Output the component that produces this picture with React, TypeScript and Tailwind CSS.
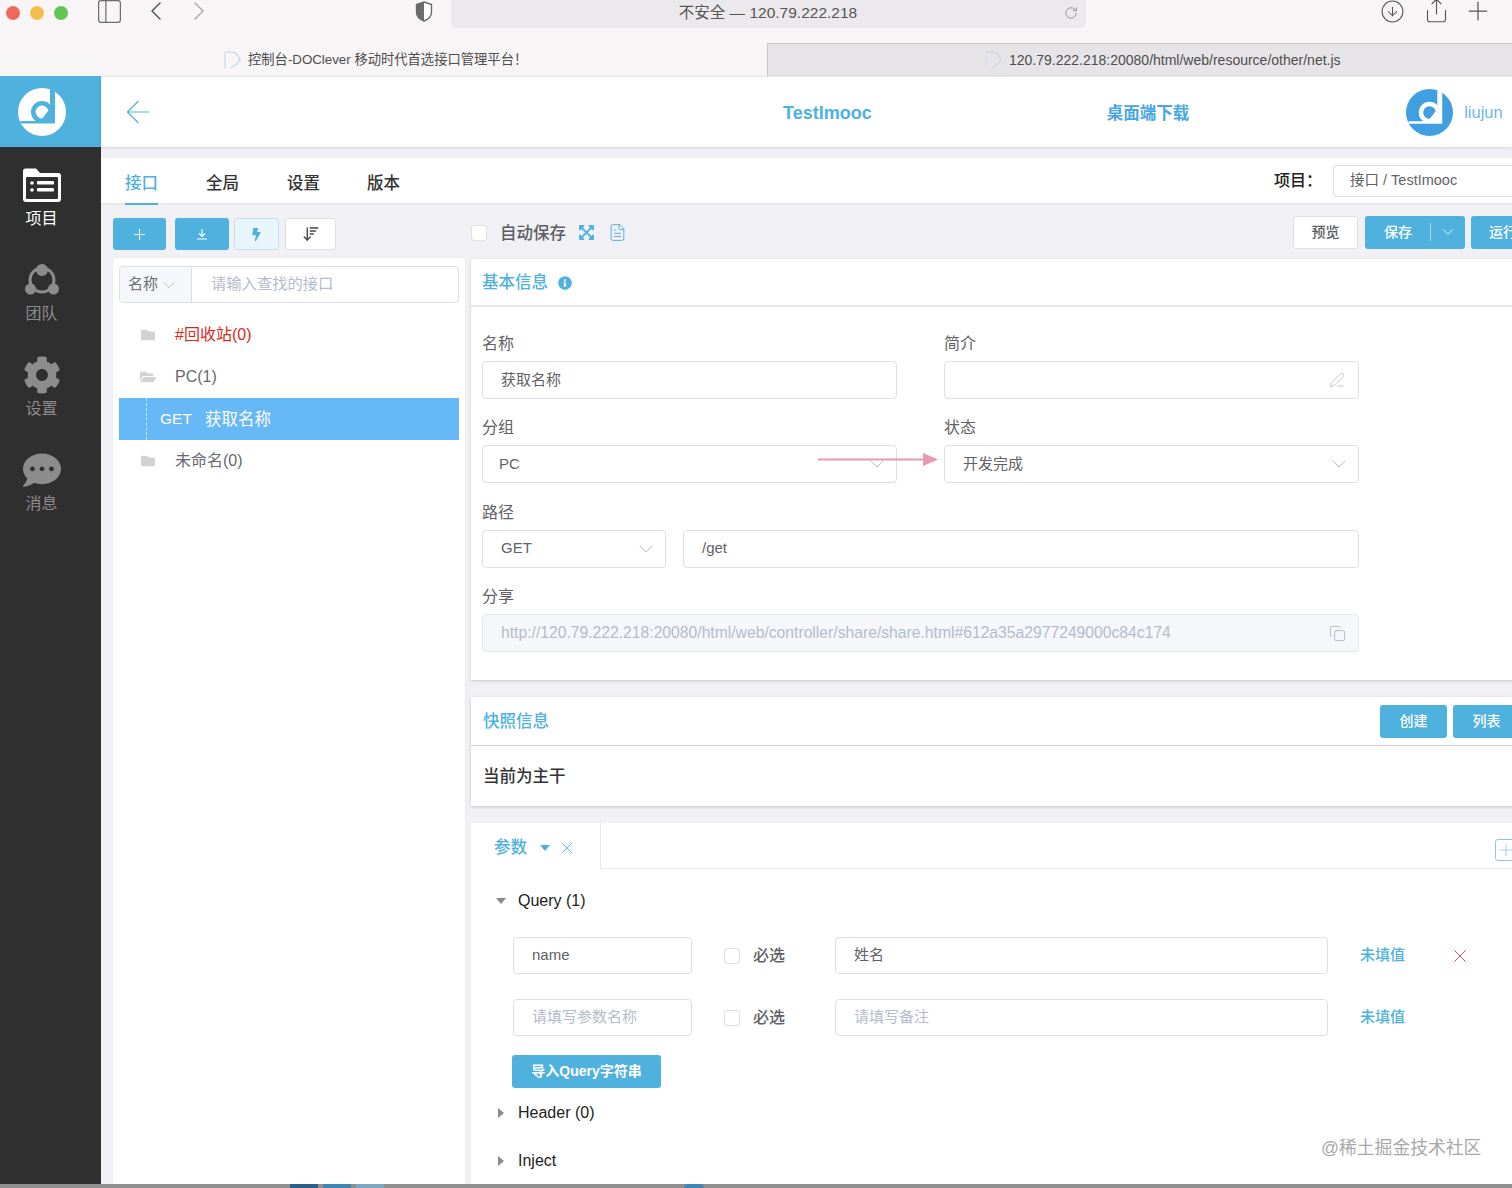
import React from "react";
import { ArrowLeft, ChevronDown, ChevronLeft, ChevronRight, CircleArrowDown, Copy, FileText, PanelLeft, Plus, RotateCw, Share, X, ArrowDownWideNarrow, PenLine } from "lucide-react";
import { FaBolt, FaCog, FaCommentDots, FaExpandArrowsAlt, FaFolder, FaFolderOpen, FaInfoCircle } from "react-icons/fa";

const font = "font-['Liberation_Sans','Noto_Sans_CJK_SC',sans-serif]";

function Logo({ size, fg, bg }: { size: number; fg: string; bg: string }) {
  return (
    <svg width={size} height={size} viewBox="0 0 48 48">
      <circle cx="24" cy="24" r="24" fill={fg} />
      <path d="M32 1.500H37V35.500H2.500V33H32Z" fill={bg} />
      <circle cx="24" cy="24" r="8.700" fill="none" stroke={bg} strokeWidth="4.600" />
      <path d="M30 23H33V34H24V31Z" fill={bg} />
    </svg>
  );
}

function Favicon() {
  return (
    <svg width="17" height="18" viewBox="0 0 17 18" fill="none">
      <path d="M1 1H7C12 1 15 5 16 9C14 12 11 15 7 17" stroke="#c4d4e4" strokeWidth="1.2" />
      <path d="M1 1V17" stroke="#d4e2f0" strokeWidth="1.6" />
    </svg>
  );
}

function NavItem({ icon, label, active }: { icon: React.ReactNode; label: string; active?: boolean }) {
  return (
    <div className={`h-[95px] pr-[18px] flex flex-col items-center ${active ? "text-white" : "text-[#8c8c8c]"}`}>
      <div className="h-[40px] mt-[18px] flex items-center justify-center">{icon}</div>
      <div className="text-[16px] leading-[24px] mt-[2px]">{label}</div>
    </div>
  );
}

function Field({ label, children }: { label: string; children: React.ReactNode }) {
  return (
    <div>
      <div className="pt-[1px] text-[16px] leading-[24px] text-[#5f6266]">{label}</div>
      <div className="mt-[5px]">{children}</div>
    </div>
  );
}

function Box({ children, className = "" }: { children?: React.ReactNode; className?: string }) {
  return (
    <div className={`h-[38px] rounded-[4px] border border-[#dcdfe6] bg-white flex items-center pl-[18px] pr-[12px] text-[15px] text-[#5f6266] ${className}`}>
      {children}
    </div>
  );
}

function Chev() {
  return <ChevronDown size={24} strokeWidth={0.8} className="ml-auto -mr-[5px] text-[#a8b0c0]" />;
}

function Check() {
  return <div className="w-[16px] h-[16px] rounded-[3px] border border-[#dcdfe6] bg-white shrink-0" />;
}

function TreeRow({ label, red, open }: { label: string; red?: boolean; open?: boolean }) {
  return (
    <div className="h-[42px] flex items-center pl-[21px]">
      {open ? <FaFolderOpen size={16} className="text-[#d2d2d2]" /> : <FaFolder size={14} className="text-[#d2d2d2] ml-[1px] mr-[1px]" />}
      <span className={`ml-[19px] text-[16px] ${red ? "text-[#e0281c]" : "text-[#666a70]"}`}>{label}</span>
    </div>
  );
}

function ParamRow({ name, note, placeholder, remove }: { name: string; note: string; placeholder?: boolean; remove?: boolean }) {
  const c = placeholder ? "text-[#b4bccc]" : "text-[#5f6266]";
  return (
    <div className="flex items-center ml-[42px] h-[37px]">
      <Box className={`w-[179px] !h-[37px] ${c}`}>{name}</Box>
      <div className="ml-[32px]"><Check /></div>
      <span className="ml-[13px] w-[32px] text-[16px] text-[#5f6266] font-medium whitespace-nowrap">必选</span>
      <Box className={`ml-[50px] w-[493px] !h-[37px] ${c}`}>{note}</Box>
      <span className="ml-[32px] w-[46px] text-[15px] font-medium text-[#4eb1de] whitespace-nowrap">未填值</span>
      {remove && <X size={22} strokeWidth={1} className="ml-[43px] text-[#e0443e]" />}
    </div>
  );
}

function Caret({ down, blue }: { down?: boolean; blue?: boolean }) {
  const color = blue ? "#4eb1de" : "#8a8a8a";
  return (
    <svg width="10" height="10" viewBox="0 0 10 10">
      {down ? <path d="M0 2H10L5 8Z" fill={color} /> : <path d="M2 0V10L8 5Z" fill={color} />}
    </svg>
  );
}

export default function App() {
  return (
    <div className={`relative w-[1512px] h-[1188px] overflow-hidden flex flex-col bg-[#f1f0f4] ${font}`}>
      {/* Browser chrome */}
      <div className="h-[76px] shrink-0 bg-[#f8f5f7] flex flex-col">
        <div className="h-[28px] flex items-start">
          <div className="flex items-center gap-[10px] pl-[6px] h-[25px]">
            <div className="w-[14px] h-[14px] rounded-full bg-[#ee6a5f]" />
            <div className="w-[14px] h-[14px] rounded-full bg-[#f5bd4f]" />
            <div className="w-[14px] h-[14px] rounded-full bg-[#61c454]" />
          </div>
          <PanelLeft size={29} strokeWidth={1} className="ml-[27px] -mt-[3px] shrink-0 text-[#6b6b6b]" />
          <ChevronLeft size={32} strokeWidth={1.1} className="ml-[16px] -mt-[5px] shrink-0 text-[#555]" />
          <ChevronRight size={32} strokeWidth={1.1} className="ml-[11px] -mt-[5px] shrink-0 text-[#aaa]" />
          <svg width="18" height="21" viewBox="0 0 18 21" className="ml-[200px] mt-[1px] shrink-0">
            <path d="M9 1L16.500 3.500V11C16.500 15.500 13 18.500 9 20C5 18.500 1.500 15.500 1.500 11V3.500Z" fill="#fff" stroke="#6b6b6b" strokeWidth="1.4" />
            <path d="M9 1L1.500 3.500V11C1.500 15.500 5 18.500 9 20Z" fill="#6b6b6b" />
          </svg>
          <div className="ml-[18px] w-[635px] h-[28px] shrink-0 bg-[#ebe9eb] rounded-b-[6px] flex items-center relative">
            <span className="w-full text-center text-[15.500px] text-[#555] pb-[2px] pr-[1px]">不安全 — 120.79.222.218</span>
            <RotateCw size={14} strokeWidth={1.2} className="absolute right-[8px] top-[6px] text-[#777]" />
          </div>
          <CircleArrowDown size={25} strokeWidth={1} className="ml-[294px] -mt-[1px] shrink-0 text-[#555]" />
          <Share size={27} strokeWidth={1} className="ml-[18px] -mt-[3px] shrink-0 text-[#555]" />
          <Plus size={30} strokeWidth={1} className="ml-[13px] -mt-[4px] shrink-0 text-[#555]" />
        </div>
        <div className="mt-[15px] h-[33px] flex text-[#4d4d4d]">
          <div className="w-[767px] flex items-center pl-[224px] text-[13.300px]">
            <Favicon />
            <span className="ml-[7px] whitespace-nowrap">控制台-DOClever 移动时代首选接口管理平台！</span>
          </div>
          <div className="flex-1 flex items-center pl-[217px] bg-[#e6e4e6] border-t border-l border-[#c8c6c8] text-[14px]">
            <Favicon />
            <span className="ml-[7px] whitespace-nowrap">120.79.222.218:20080/html/web/resource/other/net.js</span>
          </div>
        </div>
      </div>

      <div className="flex-1 min-h-0 flex">
        {/* Sidebar */}
        <div className="w-[101px] shrink-0 bg-[#2f2f2f] flex flex-col">
          <div className="h-[71px] bg-[#4eb1de] pr-[18px] flex items-center justify-center">
            <Logo size={48} fg="#ffffff" bg="#4eb1de" />
          </div>
          <NavItem
            active
            label="项目"
            icon={
              <svg width="38" height="34" viewBox="0 0 38 34">
                <path d="M0 3C0 1.500 1 0.500 2.500 0.500H13L17 5H35C37 5 38 6 38 7.500V31C38 33 37 34 35 34H3C1 34 0 33 0 31Z" fill="#fff" />
                <rect x="3" y="9" width="32" height="22" rx="1" fill="#2f2f2f" />
                <circle cx="9" cy="15" r="1.800" fill="#fff" />
                <circle cx="9" cy="22" r="1.800" fill="#fff" />
                <rect x="14" y="13" width="17" height="3.500" rx="1" fill="#fff" />
                <rect x="14" y="20" width="17" height="3.500" rx="1" fill="#fff" />
              </svg>
            }
          />
          <NavItem
            label="团队"
            icon={
              <svg width="34" height="32" viewBox="0 0 34 32" fill="none">
                <circle cx="17" cy="16" r="12" stroke="#8c8c8c" strokeWidth="3" />
                <circle cx="17" cy="6" r="6" fill="#8c8c8c" />
                <circle cx="5.500" cy="25" r="5.500" fill="#8c8c8c" />
                <circle cx="28.500" cy="25" r="5.500" fill="#8c8c8c" />
              </svg>
            }
          />
          <NavItem label="设置" icon={<FaCog size={38} />} />
          <NavItem label="消息" icon={<FaCommentDots size={38} />} />
        </div>

        {/* Main */}
        <div className="flex-1 min-w-0 flex flex-col">
          <div className="h-[71px] shrink-0 bg-white border-t border-[#e6e6e8] shadow-[0_1px_3px_rgba(0,0,0,0.12)] flex items-center relative">
            <ArrowLeft size={36} strokeWidth={0.8} className="ml-[19px] shrink-0 text-[#4eb1de]" />
            <span className="ml-[627px] text-[18px] font-bold text-[#4eb1de] mt-[2px]">TestImooc</span>
            <span className="ml-[235px] text-[16.500px] font-bold text-[#47a6e4] whitespace-nowrap mt-[2px]">桌面端下载</span>
            <div className="ml-[217px] mt-[1px]"><Logo size={47} fg="#409fe0" bg="#ffffff" /></div>
            <span className="ml-[11px] text-[16.500px] text-[#6db8ea]">liujun</span>
          </div>
          <div className="mt-[11px] h-[47px] shrink-0 bg-white border-b-2 border-[#e8e8ec] flex items-center pl-[24px] text-[16.500px] font-medium text-[#333]">
            <div className="relative h-full flex items-center pt-[5px] w-[33px] whitespace-nowrap text-[#4eb1de]">
              接口
              <div className="absolute left-0 right-0 -bottom-[2px] h-[2px] bg-[#4eb1de]" />
            </div>
            <span className="ml-[48px] pt-[5px] whitespace-nowrap">全局</span>
            <span className="ml-[48px] pt-[5px] whitespace-nowrap">设置</span>
            <span className="ml-[47px] pt-[5px] whitespace-nowrap">版本</span>
            <span className="ml-auto pt-[1px] text-[16px] w-[59px] whitespace-nowrap text-[#222]">项目：</span>
            <div className="w-[179px] h-[32px] rounded-l-[4px] border border-r-0 border-[#dcdfe6] flex items-center pl-[16px] text-[14.500px] font-normal text-[#5f6266] whitespace-nowrap">接口 / TestImooc</div>
          </div>

          <div className="flex-1 min-h-0 flex">
            {/* Left column */}
            <div className="ml-[12px] w-[352px] shrink-0 flex flex-col">
              <div className="flex items-center pt-[13px] h-[45px] shrink-0">
                <div className="w-[53px] h-[32px] rounded-[3px] bg-[#4eb1de] flex items-center justify-center text-white"><Plus size={17} strokeWidth={1.5} /></div>
                <div className="ml-[9px] w-[54px] h-[32px] rounded-[3px] bg-[#4eb1de] flex items-center justify-center">
                  <svg width="12" height="12" viewBox="0 0 12 12" fill="none" stroke="#fff" strokeWidth="1.200"><path d="M6 1V8M3 5.500L6 8.500L9 5.500M1 11H11" /></svg>
                </div>
                <div className="ml-[5px] w-[45px] h-[32px] rounded-[3px] bg-[#e8f5fb] border border-[#bfe2f2] flex items-center justify-center text-[#4eb1de]"><FaBolt size={13} /></div>
                <div className="ml-[6px] w-[51px] h-[32px] rounded-[3px] bg-white border border-[#dcdfe6] flex items-center justify-center text-[#444]"><ArrowDownWideNarrow size={18} strokeWidth={1.8} /></div>
              </div>
              <div className="mt-[8px] flex-1 bg-white rounded-t-[4px] shadow-[0_0_3px_rgba(0,0,0,0.05)] px-[6px] pt-[8px]">
                <div className="h-[37px] rounded-[4px] border border-[#dcdfe6] flex items-center text-[15px]">
                  <div className="w-[72px] h-full bg-[#f5f7fa] border-r border-[#dcdfe6] rounded-l-[4px] flex items-center pl-[8px] text-[#6b6e73] whitespace-nowrap">
                    名称<ChevronDown size={20} strokeWidth={0.9} className="ml-[1px] text-[#a8b0c0]" />
                  </div>
                  <span className="ml-[19px] text-[15.300px] text-[#b4bccc] whitespace-nowrap">请输入查找的接口</span>
                </div>
                <div className="mt-[11px]">
                  <TreeRow label="#回收站(0)" red />
                  <TreeRow label="PC(1)" open />
                  <div className="h-[42px] bg-[#66b8f6] flex items-center relative text-white text-[16.500px]">
                    <div className="absolute left-[27px] top-0 bottom-0 border-l border-dashed border-[#cfe8fb]" />
                    <span className="ml-[41px] text-[15.500px]">GET</span>
                    <span className="ml-[13px] whitespace-nowrap">获取名称</span>
                  </div>
                  <TreeRow label="未命名(0)" />
                </div>
              </div>
            </div>

            {/* Right column */}
            <div className="ml-[6px] w-[1080px] shrink-0 flex flex-col">
              <div className="h-[54px] shrink-0 flex items-center">
                <div className="mt-[1px]"><Check /></div>
                <span className="ml-[13px] mt-[2px] text-[16.500px] font-medium text-[#5a5d61] whitespace-nowrap">自动保存</span>
                <FaExpandArrowsAlt size={17} className="ml-[12px] mt-[1px] text-[#4eb1de]" />
                <FileText size={19} strokeWidth={1.2} className="ml-[13px] mt-[1px] text-[#4eb1de]" />
                <div className="ml-auto w-[65px] h-[33px] rounded-[3px] bg-white border border-[#dcdfe6] flex items-center justify-center text-[14px] font-medium text-[#5a5d61]">预览</div>
                <div className="ml-[7px] w-[100px] h-[33px] rounded-[3px] bg-[#4eb1de] flex items-center text-white text-[14px] font-medium">
                  <span className="ml-[19px] w-[46px] whitespace-nowrap">保存</span>
                  <div className="h-[18px] border-l border-[#a6d8ee]" />
                  <ChevronDown size={18} strokeWidth={1.1} className="ml-[8px]" />
                </div>
                <div className="ml-[6px] w-[80px] h-[33px] rounded-[3px] bg-[#4eb1de] flex items-center pl-[18px] text-white text-[14px] font-medium whitespace-nowrap">运行</div>
              </div>

              {/* Basic info */}
              <div className="shrink-0 bg-white rounded-t-[4px] shadow-[0_1px_3px_rgba(0,0,0,0.18)]">
                <div className="h-[48px] border-b-2 border-[#e6e6ea] flex items-center pl-[11px]">
                  <span className="text-[16.500px] mt-[1px] font-medium text-[#4eb1de] whitespace-nowrap">基本信息</span>
                  <FaInfoCircle size={14} className="ml-[10px] mt-[1px] text-[#4eb1de]" />
                </div>
                <div className="pl-[11px] pt-[24px] pb-[28px]">
                  <div className="grid grid-cols-[415px_415px] gap-x-[47px] gap-y-[16px]">
                    <Field label="名称"><Box>获取名称</Box></Field>
                    <Field label="简介"><Box className="justify-end"><PenLine size={16} strokeWidth={0.9} className="text-[#a0a4aa] mr-[1px]" /></Box></Field>
                    <Field label="分组"><Box className="!pl-[16px]">PC<Chev /></Box></Field>
                    <Field label="状态"><Box>开发完成<Chev /></Box></Field>
                  </div>
                  <div className="mt-[16.500px] w-[877px]">
                    <Field label="路径">
                      <div className="flex gap-[17px]">
                        <Box className="w-[184px]">GET<Chev /></Box>
                        <Box className="flex-1">/get</Box>
                      </div>
                    </Field>
                  </div>
                  <div className="mt-[16.500px] w-[877px]">
                    <Field label="分享">
                      <Box className="!bg-[#f5f7fa] !border-[#e4e7ed] !text-[#b4bccc]">
                        <span className="whitespace-nowrap text-[15.700px]">http://120.79.222.218:20080/html/web/controller/share/share.html#612a35a2977249000c84c174</span>
                        <Copy size={17} strokeWidth={1} className="ml-auto text-[#a0a4aa]" />
                      </Box>
                    </Field>
                  </div>
                </div>
              </div>

              {/* Snapshot */}
              <div className="mt-[17px] shrink-0 bg-white shadow-[0_1px_3px_rgba(0,0,0,0.18)]">
                <div className="h-[49px] border-b border-[#cfcfd3] flex items-center pl-[12px] pr-[31px]">
                  <span className="text-[16.500px] font-medium text-[#4eb1de] whitespace-nowrap">快照信息</span>
                  <div className="ml-auto w-[67px] h-[33px] rounded-[3px] bg-[#4eb1de] flex items-center justify-center text-white text-[14px] font-medium">创建</div>
                  <div className="ml-[6px] w-[67px] h-[33px] rounded-[3px] bg-[#4eb1de] flex items-center justify-center text-white text-[14px] font-medium">列表</div>
                </div>
                <div className="h-[60px] flex items-center pl-[12px] text-[16.500px] text-[#333] font-medium">当前为主干</div>
              </div>

              {/* Params */}
              <div className="mt-[17px] flex-1 bg-white">
                <div className="h-[46px] flex">
                  <div className="w-[130px] border-r border-[#e4e7ed] flex items-center pl-[23px] pt-[3px]">
                    <span className="text-[16.500px] font-medium text-[#4eb1de] whitespace-nowrap">参数</span>
                    <span className="ml-[13px]"><Caret down blue /></span>
                    <X size={20} strokeWidth={1} className="ml-[7px] shrink-0 text-[#4eb1de]" />
                  </div>
                  <div className="flex-1 border-b border-[#e4e7ed] flex items-center justify-end pr-[34px]">
                    <div className="w-[22px] h-[22px] rounded-[3px] border border-[#8cc6ee] flex items-center justify-center text-[#8cc6ee] mt-[9px]"><Plus size={20} strokeWidth={1} /></div>
                  </div>
                </div>
                <div className="mt-[20px] h-[24px] flex items-center pl-[25px] text-[16px] text-[#222]">
                  <Caret down />
                  <span className="ml-[12px]">Query (1)</span>
                </div>
                <div className="mt-[24px]"><ParamRow name="name" note="姓名" remove /></div>
                <div className="mt-[25px]"><ParamRow name="请填写参数名称" note="请填写备注" placeholder /></div>
                <div className="mt-[19px] ml-[41px] w-[149px] h-[33px] rounded-[3px] bg-[#4eb1de] flex items-center justify-center text-white text-[14px] font-semibold whitespace-nowrap">导入Query字符串</div>
                <div className="mt-[13px] h-[24px] flex items-center pl-[25px] text-[16px] text-[#222]">
                  <Caret />
                  <span className="ml-[12px]">Header (0)</span>
                </div>
                <div className="mt-[24px] h-[24px] flex items-center pl-[25px] text-[16px] text-[#222]">
                  <Caret />
                  <span className="ml-[12px]">Inject</span>
                </div>
              </div>
            </div>
          </div>
        </div>
      </div>

      {/* Annotation arrow drawn over the form */}
      <svg className="absolute left-[817px] top-[451px]" width="122" height="18" viewBox="0 0 122 18">
        <path d="M1 8.500H106" stroke="#e79ab4" strokeWidth="2" />
        <path d="M106 2L121 8.500L106 15Z" fill="#e79ab4" />
      </svg>

      {/* Watermark */}
      <span className="absolute left-[1321px] top-[1135px] text-[17.800px] text-[#a8a8a8] whitespace-nowrap">@稀土掘金技术社区</span>

      {/* Dock edge at the bottom of the capture */}
      <div className="absolute left-0 right-0 bottom-0 h-[4px] bg-[#8f8f8f] flex">
        <div className="ml-[290px] w-[28px] bg-[#2d5f86]" />
        <div className="ml-[5px] w-[28px] bg-[#3f86b3]" />
        <div className="ml-[5px] w-[28px] bg-[#7ea7c0]" />
        <div className="ml-[300px] w-[20px] bg-[#3f86b3] rounded-t-full" />
      </div>
    </div>
  );
}
